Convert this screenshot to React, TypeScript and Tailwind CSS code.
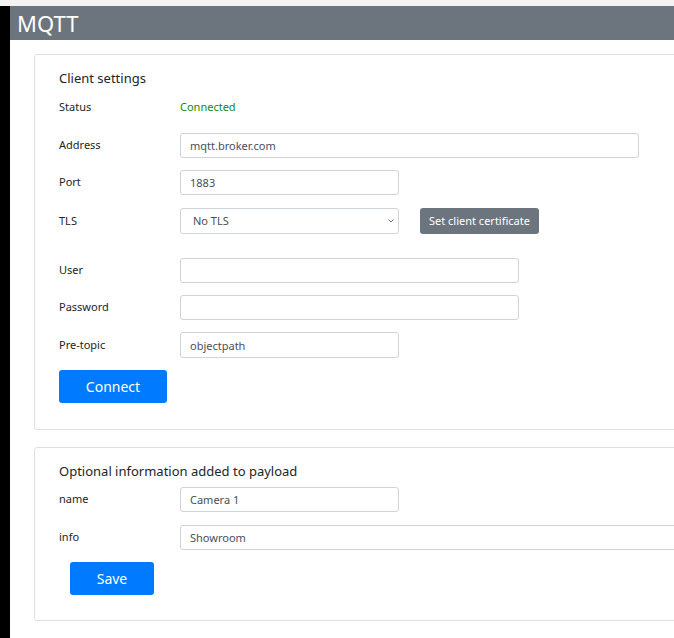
import React from 'react';

const FONT = { fontFamily: '"Noto Sans", "Open Sans", Arial, sans-serif' };

const Row: React.FC<{ label: string; className?: string; children: React.ReactNode }> = ({ label, className = '', children }) => (
  <div className={`flex items-center h-[25px] ${className}`}>
    <div className="w-[121px] shrink-0 text-[11px] text-[#212529]">{label}</div>
    {children}
  </div>
);

const Field: React.FC<{ value?: string; width: string }> = ({ value = '', width }) => (
  <input
    readOnly
    value={value}
    className={`${width} h-[25px] shrink-0 rounded-[3px] border border-[#ced4da] bg-white px-[9px] text-[11px] text-[#495057] outline-none`}
  />
);

const App: React.FC = () => {
  return (
    <div className="w-[674px] h-[638px] overflow-hidden bg-white flex flex-col" style={FONT}>
      <div className="h-[6px] bg-[#f3f3f3] shrink-0" />
      <div className="flex flex-1 min-h-0">
        <div className="w-[10px] shrink-0 bg-black" />
        <div className="flex-1 min-w-0 flex flex-col">
          <div className="h-[34px] shrink-0 bg-[#6c757d] pl-[7px] flex items-center text-[22px] text-white leading-none">
            MQTT
          </div>

          <div className="pl-[24px] pt-[14px] flex flex-col gap-[17px]">
            {/* Client settings */}
            <div className="w-[720px] rounded-[3px] border border-[#dfdfdf] pl-[24px] pt-[13px] pb-[26px]">
              <div className="text-[13px] text-[#212529] h-[21px] leading-[21px]">Client settings</div>
              <Row label="Status" className="mt-[6px]">
                <span className="text-[11px] text-[#138a13]">Connected</span>
              </Row>
              <Row label="Address" className="mt-[13px]">
                <Field value="mqtt.broker.com" width="w-[459px]" />
              </Row>
              <Row label="Port" className="mt-[12px]">
                <Field value="1883" width="w-[219px]" />
              </Row>
              <div className="flex items-center h-[26px] mt-[13px]">
                <div className="w-[121px] shrink-0 text-[11px] text-[#212529]">TLS</div>
                <div className="w-[219px] h-[26px] shrink-0 rounded-[3px] border border-[#ced4da] bg-white pl-[12px] pr-[4px] flex items-center justify-between text-[11px] text-[#495057]">
                  <span>No TLS</span>
                  <svg width="6" height="4" viewBox="0 0 6 4" fill="none" stroke="#6c757d" strokeWidth="1">
                    <path d="M0.5 0.5l2.5 2.5 2.5-2.5" />
                  </svg>
                </div>
                <button className="ml-[21px] h-[26px] px-[9px] rounded-[3px] bg-[#6c757d] text-white text-[11px]">
                  Set client certificate
                </button>
              </div>
              <Row label="User" className="mt-[24px]">
                <Field width="w-[339px]" />
              </Row>
              <Row label="Password" className="mt-[12px]">
                <Field width="w-[339px]" />
              </Row>
              <div className="flex items-center h-[26px] mt-[12px]">
                <div className="w-[121px] shrink-0 text-[11px] text-[#212529]">Pre-topic</div>
                <input
                  readOnly
                  value="objectpath"
                  className="w-[219px] h-[26px] rounded-[3px] border border-[#ced4da] bg-white px-[9px] text-[11px] text-[#495057] outline-none"
                />
              </div>
              <button className="mt-[12px] w-[108px] h-[33px] rounded-[3px] bg-[#007bff] text-white text-[14px]">
                Connect
              </button>
            </div>

            {/* Optional info */}
            <div className="w-[720px] rounded-[3px] border border-[#dfdfdf] pl-[24px] pt-[13px] pb-[25px]">
              <div className="text-[13px] text-[#212529] h-[21px] leading-[21px]">Optional information added to payload</div>
              <Row label="name" className="mt-[5px]">
                <Field value="Camera 1" width="w-[219px]" />
              </Row>
              <Row label="info" className="mt-[13px]">
                <Field value="Showroom" width="w-[520px]" />
              </Row>
              <button className="mt-[12px] ml-[11px] w-[84px] h-[33px] rounded-[3px] bg-[#007bff] text-white text-[14px]">
                Save
              </button>
            </div>
          </div>
        </div>
      </div>
    </div>
  );
};

export default App;
